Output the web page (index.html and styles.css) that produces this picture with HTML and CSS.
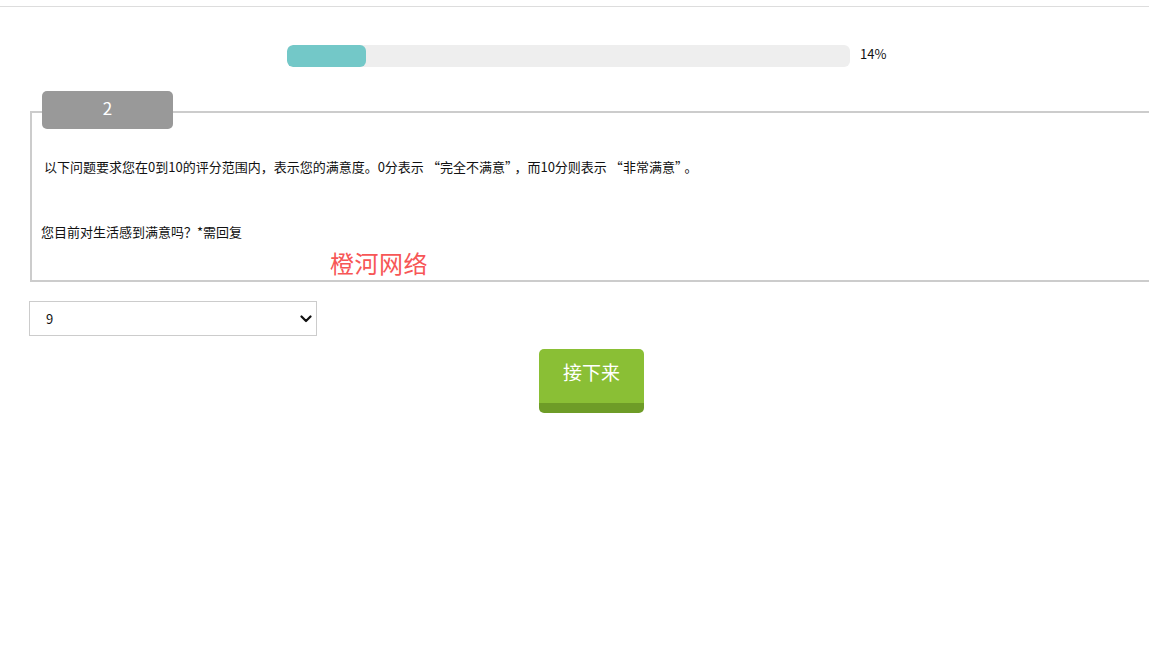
FILE: index.html
```html
<!DOCTYPE html>
<html lang="zh-CN">
<head>
<meta charset="utf-8">
<title>问卷</title>
<link rel="stylesheet" href="styles.css">
</head>
<body>
<div class="topbar"></div>
<div class="progress-row">
  <div class="progress"><div class="progress-fill" style="width:79px"></div></div>
  <span class="progress-text">14%</span>
</div>
<div class="survey">
  <div class="qnum">2</div>
  <div class="question">
    <p class="intro">以下问题要求您在0到10的评分范围内，表示您的满意度。0分表示<span class="qo">“</span>完全不满意<span class="qc">”</span>，而10分则表示<span class="qo">“</span>非常满意<span class="qc">”</span>。</p>
    <p class="ask">您目前对生活感到满意吗？*需回复</p>
  </div>
  <span class="watermark">橙河网络</span>
</div>
<div class="select-wrap">
  <select class="answer">
    <option>0</option><option>1</option><option>2</option><option>3</option><option>4</option><option>5</option><option>6</option><option>7</option><option>8</option><option selected>9</option><option>10</option>
  </select>
  <svg class="chev" width="12" height="8" viewBox="0 0 12 8"><path d="M1.5 1.5 L6 6 L10.5 1.5" fill="none" stroke="#111" stroke-width="2.2" stroke-linecap="round" stroke-linejoin="round"/></svg>
</div>
<div class="actions">
  <button class="next">接下来</button>
</div>
</body>
</html>
```
FILE: styles.css
```css
html, body {
  margin: 0;
  padding: 0;
  overflow-x: hidden;
  background: #fff;
}
body {
  font-family: "Noto Sans CJK SC", "Noto Sans", sans-serif;
  color: #111;
  width: 1149px;
}
.topbar {
  height: 6px;
  border-bottom: 1px solid #ddd;
}
.progress-row {
  display: flex;
  align-items: center;
  padding-left: 287px;
  margin-top: 38px;
  height: 22px;
}
.progress {
  width: 563px;
  height: 22px;
  background: #eeeeee;
  border-radius: 6px;
  overflow: hidden;
}
.progress-fill {
  height: 100%;
  background: #73c8c8;
  border-radius: 6px;
}
.progress-text {
  margin-left: 10px;
  font-size: 13px;
  line-height: 16px;
  margin-bottom: 5px;
  color: #111;
}
.survey {
  position: relative;
  margin-top: 24px;
  margin-left: 30px;
  width: 1200px;
}
.qnum {
  position: relative;
  z-index: 1;
  box-sizing: border-box;
  width: 131px;
  height: 38px;
  margin-left: 12px;
  background: #999999;
  color: #fff;
  border-radius: 5px;
  text-align: center;
  font-size: 17px;
  line-height: 33px;
}
.question {
  margin-top: -18px;
  border: 2px solid #cccccc;
  padding: 45px 10px 0 9px;
  box-sizing: border-box;
  height: 171px;
}
.intro {
  margin: 0 0 0 3px;
  font-size: 13px;
  line-height: 18px;
}
.qo {
  padding-left: 3px;
}
.qc {
  padding-right: 3px;
}
.ask {
  margin: 47px 0 0 0;
  font-size: 13px;
  line-height: 18px;
}
.watermark {
  position: absolute;
  left: 300px;
  top: 157px;
  font-size: 24px;
  color: #f75656;
  line-height: 30px;
  letter-spacing: 0.5px;
}
.select-wrap {
  position: relative;
  margin-top: 19px;
  margin-left: 29px;
  width: 288px;
  height: 35px;
}
.answer {
  appearance: none;
  -webkit-appearance: none;
  width: 288px;
  height: 35px;
  box-sizing: border-box;
  border: 1px solid #cccccc;
  border-radius: 0;
  background: #fff;
  padding: 0 0 0 16px;
  font-family: "Noto Sans CJK SC", "Noto Sans", sans-serif;
  font-size: 13px;
  color: #111;
  outline: none;
}
.chev {
  position: absolute;
  right: 5px;
  top: 14px;
  pointer-events: none;
}
.actions {
  margin-top: 13px;
  padding-left: 539px;
}
.next {
  box-sizing: border-box;
  width: 105px;
  height: 64px;
  border: none;
  border-bottom: 10px solid #6e9c27;
  border-radius: 5px;
  background: #8abf35;
  color: #fff;
  font-family: "Noto Sans CJK SC", "Noto Sans", sans-serif;
  font-size: 19px;
  padding: 0 0 9px 0;
  cursor: pointer;
}
```
